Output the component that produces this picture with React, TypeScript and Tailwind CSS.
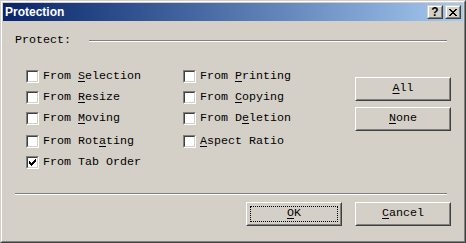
import * as React from "react";

const mono = { fontFamily: '"Liberation Mono", "DejaVu Sans Mono", monospace' };

// a label with one underlined access key
const Label = ({ text, mnemonic }: { text: string; mnemonic?: number }) => {
    if (mnemonic === undefined) return <span>{text}</span>;
    return (
        <span>
            {text.slice(0, mnemonic)}
            <span className="underline underline-offset-[2px] decoration-1">{text[mnemonic]}</span>
            {text.slice(mnemonic + 1)}
        </span>
    );
};

const CheckBox = ({ text, mnemonic, checked, className }: { text: string; mnemonic?: number; checked?: boolean; className?: string }) => (
    <div className={"flex items-center h-[13px] " + (className ?? "")}>
        <div className="w-[13px] h-[13px] border border-t-[#808080] border-l-[#808080] border-r-white border-b-white">
            <div className="w-full h-full border border-t-[#404040] border-l-[#404040] border-r-[#d4d0c8] border-b-[#d4d0c8] bg-white flex items-center justify-center">
                {checked && (
                    <svg width="7" height="7" viewBox="0 0 7 7" shapeRendering="crispEdges">
                        <path d="M6 0h1v1h-1zM5 1h2v1h-2zM0 2h1v1h-1zM4 2h3v1h-3zM0 3h2v1h-2zM3 3h3v1h-3zM0 4h5v1h-5zM1 5h3v1h-3zM2 6h1v1h-1z" fill="#000" />
                    </svg>
                )}
            </div>
        </div>
        <span className="ml-[4px] text-[11.67px] leading-[13px] text-black whitespace-nowrap">
            <Label text={text} mnemonic={mnemonic} />
        </span>
    </div>
);

const Button = ({ text, mnemonic, focused, className }: { text: string; mnemonic?: number; focused?: boolean; className?: string }) => (
    <div className={"w-[96px] h-[24px] border border-t-white border-l-white border-r-[#404040] border-b-[#404040] " + (className ?? "")}>
        <div className="w-full h-full border border-t-[#d4d0c8] border-l-[#d4d0c8] border-r-[#808080] border-b-[#808080] p-[2px]">
            <div className={"w-full h-full flex items-center justify-center text-[11.67px] text-black " + (focused ? "border border-dotted border-black" : "")}>
                <Label text={text} mnemonic={mnemonic} />
            </div>
        </div>
    </div>
);

const CaptionButton = ({ children }: { children: React.ReactNode }) => (
    <div className="w-[16px] h-[14px] border border-t-[#d4d0c8] border-l-[#d4d0c8] border-r-[#404040] border-b-[#404040]">
        <div className="w-full h-full bg-[#d4d0c8] border border-t-white border-l-white border-r-[#808080] border-b-[#808080] flex items-center justify-center">
            {children}
        </div>
    </div>
);

const Etched = ({ className }: { className?: string }) => (
    <div className={"h-[2px] border-t border-t-[#808080] border-b border-b-white " + (className ?? "")} />
);

export default function App() {
    return (
        <div className="w-[466px] h-[243px] bg-[#d4d0c8] border border-t-[#d4d0c8] border-l-[#d4d0c8] border-r-[#404040] border-b-[#404040]" style={mono}>
            <div className="h-full border border-t-white border-l-white border-r-[#808080] border-b-[#808080] p-px flex flex-col">
                {/* caption */}
                <div className="h-[18px] flex items-center justify-between pl-[2px] pr-[2px] bg-gradient-to-r from-[#0a246a] to-[#a6caf0]">
                    <span className="text-white font-bold text-[12px] leading-[18px]" style={{ fontFamily: '"Liberation Sans", Arial, sans-serif' }}>
                        Protection
                    </span>
                    <div className="flex gap-[2px]">
                        <CaptionButton>
                            <span className="text-black font-bold text-[12px] leading-[10px]" style={{ fontFamily: '"Liberation Sans", Arial, sans-serif' }}>?</span>
                        </CaptionButton>
                        <CaptionButton>
                            <svg width="8" height="7" viewBox="0 0 8 7" shapeRendering="crispEdges">
                                <path d="M0 0h2v1h-2zM6 0h2v1h-2zM1 1h2v1h-2zM5 1h2v1h-2zM2 2h4v1h-4zM3 3h2v1h-2zM2 4h4v1h-4zM1 5h2v1h-2zM5 5h2v1h-2zM0 6h2v1h-2zM6 6h2v1h-2z" fill="#000" />
                            </svg>
                        </CaptionButton>
                    </div>
                </div>

                {/* group header */}
                <div className="mt-[13px] pl-[12px] pr-[16px] h-[13px] flex items-center">
                    <span className="text-[11.67px] leading-[13px] text-black">Protect:</span>
                    <Etched className="flex-1 ml-[18px]" />
                </div>

                {/* options */}
                <div className="mt-[23px] pl-[23px] flex">
                    <div className="w-[157px] flex flex-col">
                        <CheckBox text="From Selection" mnemonic={5} />
                        <CheckBox text="From Resize" mnemonic={5} className="mt-[8px]" />
                        <CheckBox text="From Moving" mnemonic={5} className="mt-[8px]" />
                        <CheckBox text="From Rotating" mnemonic={8} className="mt-[10px]" />
                        <CheckBox text="From Tab Order" checked className="mt-[8px]" />
                    </div>
                    <div className="w-[172px] flex flex-col">
                        <CheckBox text="From Printing" mnemonic={5} />
                        <CheckBox text="From Copying" mnemonic={5} className="mt-[8px]" />
                        <CheckBox text="From Deletion" mnemonic={6} className="mt-[8px]" />
                        <CheckBox text="Aspect Ratio" mnemonic={0} className="mt-[10px]" />
                    </div>
                    <div className="flex flex-col">
                        <Button text="All" mnemonic={0} className="mt-[7px]" />
                        <Button text="None" mnemonic={0} className="mt-[6px]" />
                    </div>
                </div>

                <Etched className="mt-[24px] ml-[12px] mr-[16px]" />

                <div className="mt-[7px] pr-[12px] flex justify-end gap-[13px]">
                    <Button text="OK" mnemonic={0} focused />
                    <Button text="Cancel" mnemonic={0} />
                </div>
            </div>
        </div>
    );
}
